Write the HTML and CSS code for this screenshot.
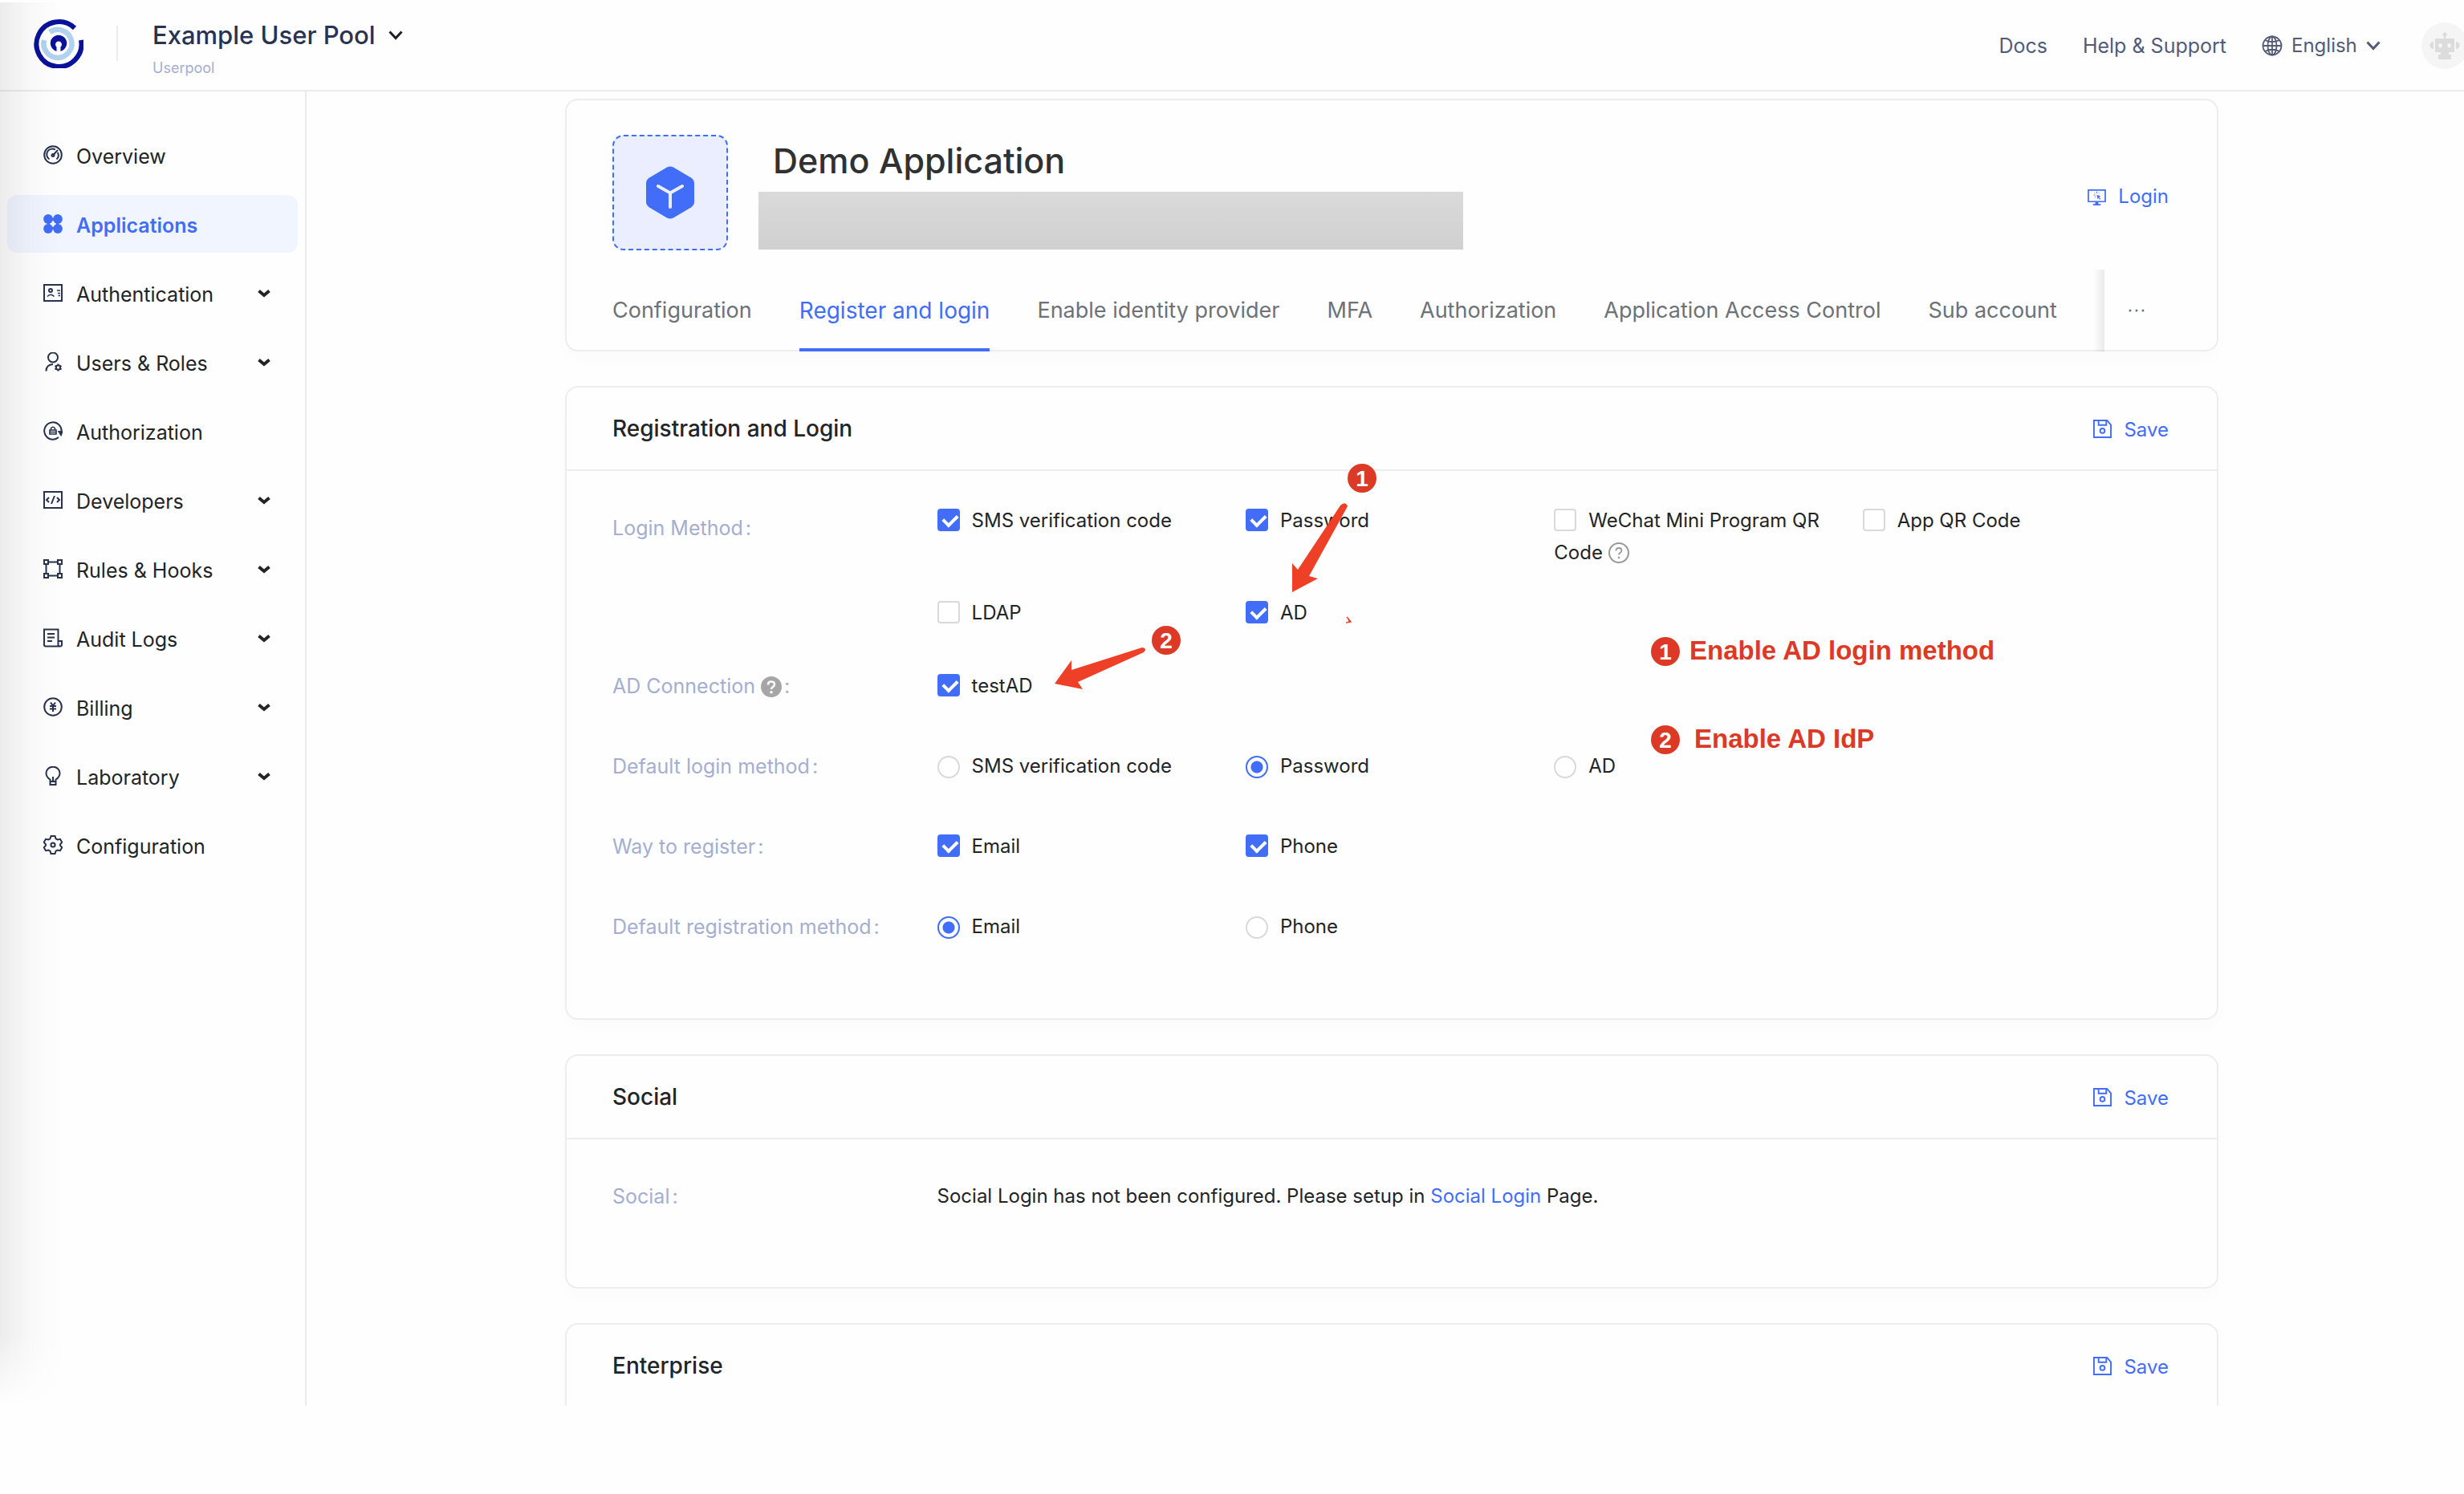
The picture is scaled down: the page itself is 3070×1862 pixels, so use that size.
FILE: index.html
```html
<!DOCTYPE html>
<html lang="en">
<head>
<meta charset="utf-8">
<title>Demo Application</title>
<link rel="stylesheet" href="styles.css">
</head>
<body>
<svg class="defs" aria-hidden="true">
  <symbol id="chevron" viewBox="0 0 18 12"><path d="M1.500 1.500l7.500 8 7.500-8" fill="none" stroke="currentColor" stroke-width="3"/></symbol>
  <symbol id="caret" viewBox="0 0 16 11"><path d="M1.500 2.500l6.500 5.500 6.500-5.500" fill="none" stroke="currentColor" stroke-width="4"/></symbol>
  <symbol id="save" viewBox="0 0 24 24"><g fill="none" stroke="currentColor" stroke-width="2"><path d="M1 1h17l5 6v16H1z"/><path d="M7 1v6h10V1"/><circle cx="12" cy="14.500" r="3"/></g></symbol>
</svg>
<div class="app">
  <header class="topbar">
    <a class="logo" href="#" aria-label="Home">
      <svg viewBox="0 0 62 62" fill="none">
        <path d="M51 12A28 28 0 1 0 59 27" stroke="#0a129b" stroke-width="6"/>
        <path d="M20 17A17.500 17.500 0 1 1 13 27" stroke="#b1d3ef" stroke-width="6.500"/>
        <path d="M25.500 39.500A10.200 10.200 0 1 1 36.500 39.500L33.500 41V35.500A4 4 0 1 0 28.500 35.500V41Z" fill="#0a129b"/>
      </svg>
    </a>
    <span class="topbar-rule"></span>
    <div class="pool">
      <label class="picker pool-picker">
        <select aria-label="User pool"><option>Example User Pool</option></select>
        <svg class="chevron"><use href="#chevron"/></svg>
      </label>
      <span class="pool-kind">Userpool</span>
    </div>
    <nav class="topbar-links">
      <a href="#">Docs</a>
      <a href="#">Help &amp; Support</a>
      <label class="picker lang-picker">
        <svg class="globe" viewBox="0 0 26 26" fill="none" stroke="currentColor" stroke-width="1.800"><circle cx="13" cy="13" r="11.500"/><ellipse cx="13" cy="13" rx="5.500" ry="11.500"/><path d="M13 1.500v23M1.500 13h23M4 6q9 4.500 18 0M4 20q9-4.500 18 0"/></svg>
        <select aria-label="Language"><option>English</option></select>
        <svg class="chevron"><use href="#chevron"/></svg>
      </label>
      <a class="avatar" href="#" aria-label="Account">
        <svg viewBox="0 0 38 34" fill="#dcdcdc"><circle cx="19" cy="3" r="2.500"/><path d="M18 4h2v5h-2z"/><path fill-rule="evenodd" d="M7 8h24v17H7zM13.500 14a2.300 2.800 0 1 0 .1 0zM24.500 14a2.300 2.800 0 1 0 .1 0z"/><path d="M5 12v9a4.500 4.500 0 0 1 0-9zM33 12v9a4.500 4.500 0 0 0 0-9zM14 25h10v3h3v6H11v-6h3z"/></svg>
      </a>
    </nav>
  </header>

  <div class="columns">
    <nav class="sidebar">
      <a class="nav-item" href="#">
        <svg class="nav-icon" viewBox="0 0 24 24"><circle cx="12" cy="12" r="10.800"/><path d="M7.500 17.500a7 7 0 0 1 7.500-12M17.800 9a7 7 0 0 1-1.300 8.500M12 12.500l6-6.500"/><circle cx="12" cy="12.500" r="1.500"/></svg>
        <span>Overview</span>
      </a>
      <a class="nav-item active" href="#">
        <svg class="nav-icon solid" viewBox="0 0 24 24"><circle cx="6" cy="6" r="5.900"/><circle cx="18" cy="6" r="5.900"/><circle cx="6" cy="18" r="5.900"/><circle cx="18" cy="18" r="5.900"/><path d="M11 5h2v3h-2zM11 16h2v3h-2zM5 11h3v2H5zM16 11h3v2h-3z"/></svg>
        <span>Applications</span>
      </a>
      <a class="nav-item" href="#">
        <svg class="nav-icon" viewBox="0 0 24 24"><path d="M1 2h22v20H1z"/><circle cx="9" cy="9" r="2"/><path d="M5 16.500q4-4.500 8.500 0M17 9h4M18 12.500h3M18.500 15.500h2.500" stroke-width="1.600"/></svg>
        <span>Authentication</span><svg class="caret"><use href="#caret"/></svg>
      </a>
      <a class="nav-item" href="#">
        <svg class="nav-icon" viewBox="0 0 24 24"><circle cx="12" cy="6.500" r="6"/><path d="M3.500 23.500q0-8 8.500-8.500"/><circle cx="18.500" cy="19" r="2.700"/><path d="M18.500 14.500v2M18.500 21.500v2M14.500 16.800l1.700 1M20.800 20.300l1.700 1M14.500 21.300l1.700-1M20.800 17.800l1.700-1"/></svg>
        <span>Users &amp; Roles</span><svg class="caret"><use href="#caret"/></svg>
      </a>
      <a class="nav-item" href="#">
        <svg class="nav-icon" viewBox="0 0 24 24"><path d="M22.500 13.500A10.700 10.700 0 1 0 19 20"/><path d="M19.500 13h4l-1.500 4z" fill="currentColor"/><path d="M8 11h8v5H8zM9.500 11V9q2.500-3.500 5 0v2M8 13.500h8" stroke-width="1.600"/></svg>
        <span>Authorization</span>
      </a>
      <a class="nav-item" href="#">
        <svg class="nav-icon" viewBox="0 0 24 24"><path d="M1 2h22v20H1zM7 9l-3 3 3 3M17 9l3 3-3 3M14 7l-4 10"/></svg>
        <span>Developers</span><svg class="caret"><use href="#caret"/></svg>
      </a>
      <a class="nav-item" href="#">
        <svg class="nav-icon" viewBox="0 0 24 24"><path d="M1 1h5v5H1zM18 1h5v5h-5zM1 18h5v5H1zM18 18h5v5h-5zM6 3.500h12M6 20.500h12M3.500 6v12M20.500 6v12"/></svg>
        <span>Rules &amp; Hooks</span><svg class="caret"><use href="#caret"/></svg>
      </a>
      <a class="nav-item" href="#">
        <svg class="nav-icon" viewBox="0 0 24 24"><path d="M18.500 22.500H3q-2 0-2-2V1.500h17.500zM18.500 16H23v4.500q0 2-2.200 2t-2.300-2zM5 7h9M5 11.500h9M5 16h6"/></svg>
        <span>Audit Logs</span><svg class="caret"><use href="#caret"/></svg>
      </a>
      <a class="nav-item" href="#">
        <svg class="nav-icon" viewBox="0 0 24 24"><circle cx="12" cy="12" r="10.800"/><path d="M9 6.500l3 4 3-4M12 10.500V18M8 11h8M8 14.500h8"/></svg>
        <span>Billing</span><svg class="caret"><use href="#caret"/></svg>
      </a>
      <a class="nav-item" href="#">
        <svg class="nav-icon" viewBox="0 0 24 24"><path d="M8.500 19v-2.500q-5-3-5-8a8.500 7.800 0 0 1 17 0q0 5-5 8V19zM12 13v5.500M8.500 19v4h7v-4"/></svg>
        <span>Laboratory</span><svg class="caret"><use href="#caret"/></svg>
      </a>
      <a class="nav-item" href="#">
        <svg class="nav-icon" viewBox="0 0 24 24"><path d="M9.500 1h5l1 3.300 2.200 1.200L21 4.800l2.300 4-2.300 2.500v1.400l2.300 2.500-2.300 4-3.300-.7-2.200 1.200-1 3.300h-5l-1-3.300-2.200-1.200-3.300.7-2.300-4L3 12.700v-1.400L.7 8.800l2.300-4 3.300.7 2.200-1.200z"/><circle cx="12" cy="12" r="2.600"/></svg>
        <span>Configuration</span>
      </a>
    </nav>

    <main class="content">
      <section class="card">
        <div class="app-head">
          <div class="app-icon">
            <svg viewBox="0 0 60 66"><path d="M26 1.500q4-2 8 0l22 13q4 2.500 4 7v23q0 4.500-4 7l-22 13q-4 2-8 0l-22-13q-4-2.500-4-7v-23q0-4.500 4-7z" fill="#426df8"/><path d="M15 25l15 8.500L45 25M30 33.500V51" fill="none" stroke="#eaeeff" stroke-width="4" stroke-linecap="round"/></svg>
          </div>
          <div class="app-title">
            <h1>Demo Application</h1>
            <div class="redacted"></div>
          </div>
          <button class="action" type="button">
            <svg viewBox="0 0 24 24"><path d="M1 3h22v15H1z" fill="none" stroke="currentColor" stroke-width="1.800"/><path d="M10 18h4v3h3v2H7v-2h3zM12 9l5 2-2 1 2 2.500-1 1-2-2.500-1 2z" fill="currentColor"/><path d="M12 5v2M8 9.500h2M9 6.500l1 1M15 6.500l-1 1M9.500 12.500l1-1" stroke="currentColor"/></svg>
            <span>Login</span>
          </button>
        </div>
        <div class="tabs">
          <div class="tab-list" role="tablist">
            <button type="button" role="tab">Configuration</button>
            <button type="button" role="tab" aria-selected="true">Register and login</button>
            <button type="button" role="tab">Enable identity provider</button>
            <button type="button" role="tab">MFA</button>
            <button type="button" role="tab">Authorization</button>
            <button type="button" role="tab">Application Access Control</button>
            <button type="button" role="tab">Sub account</button>
          </div>
          <button class="tab-more" type="button" aria-label="More tabs"><svg viewBox="0 0 20 4" fill="currentColor"><circle cx="2" cy="2" r="1.500"/><circle cx="10" cy="2" r="1.500"/><circle cx="18" cy="2" r="1.500"/></svg></button>
        </div>
      </section>

      <section class="card">
        <div class="card-head">
          <h2>Registration and Login</h2>
          <button class="action" type="button"><svg><use href="#save"/></svg><span>Save</span></button>
        </div>
        <form class="card-body">
          <div class="row first">
            <span class="row-label low">Login Method<i>:</i></span>
            <div class="options">
              <label><input type="checkbox" checked>SMS verification code</label>
              <label><input type="checkbox" checked>Password</label>
              <label><input type="checkbox">WeChat Mini Program QR Code <svg class="hint" viewBox="0 0 26 26"><circle cx="13" cy="13" r="12" fill="none" stroke="#999" stroke-width="2"/><path d="M9.500 10.500q0-3.500 3.500-3.500t3.500 3q0 2-2 3-1.500.8-1.500 2.500" fill="none" stroke="#999" stroke-width="1.800"/><circle cx="13" cy="19" r="1.300" fill="#999"/></svg></label>
              <label><input type="checkbox">App QR Code</label>
              <label><input type="checkbox">LDAP</label>
              <label><input type="checkbox" checked>AD</label>
            </div>
          </div>
          <div class="row second">
            <span class="row-label">AD Connection <svg class="hint" viewBox="0 0 26 26"><circle cx="13" cy="13" r="13" fill="#a6a6a6"/><path d="M9 10.500q0-4 4-4t4 3.500q0 2-2 3.200-2 1.100-2 2.800" fill="none" stroke="#fff" stroke-width="2.600"/><circle cx="13" cy="19.800" r="1.800" fill="#fff"/></svg><i>:</i></span>
            <div class="options">
              <label><input type="checkbox" checked>testAD</label>
            </div>
          </div>
          <div class="row">
            <span class="row-label">Default login method<i>:</i></span>
            <div class="options">
              <label><input type="radio" name="login">SMS verification code</label>
              <label><input type="radio" name="login" checked>Password</label>
              <label><input type="radio" name="login">AD</label>
            </div>
          </div>
          <div class="row">
            <span class="row-label">Way to register<i>:</i></span>
            <div class="options">
              <label><input type="checkbox" checked>Email</label>
              <label><input type="checkbox" checked>Phone</label>
            </div>
          </div>
          <div class="row">
            <span class="row-label">Default registration method<i>:</i></span>
            <div class="options">
              <label><input type="radio" name="register" checked>Email</label>
              <label><input type="radio" name="register">Phone</label>
            </div>
          </div>
        </form>
        <svg class="notes" viewBox="0 0 1820 500" fill="#dc3a26">
          <g fill="#ee4026">
            <path d="M966 149q6-6 9 1L927 237l11 3-32 17v-36l7 8z"/>
            <path d="M719 326q7 1 2 6L639 369l6 9-35-7 21-29v12z"/>
            <path d="M974 288l5 6-6 1M976 290l1 4" fill="none" stroke="#ee4026" stroke-width="1.500"/>
          </g>
          <circle cx="993" cy="115" r="18"/><text class="digit" x="993" y="125">1</text>
          <circle cx="749" cy="317" r="18"/><text class="digit" x="749" y="327">2</text>
          <circle cx="1371" cy="331" r="18"/><text class="digit" x="1371" y="341">1</text>
          <text x="1401" y="341">Enable AD login method</text>
          <circle cx="1371" cy="441" r="18"/><text class="digit" x="1371" y="451">2</text>
          <text x="1407" y="451">Enable AD IdP</text>
        </svg>
      </section>

      <section class="card">
        <div class="card-head">
          <h2>Social</h2>
          <button class="action" type="button"><svg><use href="#save"/></svg><span>Save</span></button>
        </div>
        <div class="card-body compact">
          <div class="row">
            <span class="row-label">Social<i>:</i></span>
            <p>Social Login has not been configured. Please setup in <a href="#">Social Login</a> Page.</p>
          </div>
        </div>
      </section>

      <section class="card">
        <div class="card-head">
          <h2>Enterprise</h2>
          <button class="action" type="button"><svg><use href="#save"/></svg><span>Save</span></button>
        </div>
        <div class="card-body"></div>
      </section>
    </main>
  </div>
</div>
</body>
</html>
```
FILE: styles.css
```css
* { box-sizing: border-box; }

body {
  margin: 0;
  background: #fefefe;
  color: #222426;
  font: 24px/40px Inter, "Liberation Sans", sans-serif;
}

h1, h2, p { margin: 0; }
a { color: inherit; text-decoration: none; }
button, select {
  margin: 0;
  padding: 0;
  border: 0;
  background: none;
  color: inherit;
  font: inherit;
  cursor: pointer;
}
select { appearance: none; }
.defs { display: none; }

.app {
  position: relative;
  display: flex;
  flex-direction: column;
  height: calc(100vh - 110px);
  overflow: hidden;
}

/* soft shade along the left window edge */
.app::after {
  content: "";
  position: absolute;
  inset: 3px auto 0 0;
  width: 76px;
  background: linear-gradient(to right, rgba(0, 0, 0, .07), rgba(0, 0, 0, .025) 50%, transparent);
  mask-image: linear-gradient(to top, transparent, #000 90px);
  pointer-events: none;
}

/* top bar */
.topbar {
  display: flex;
  flex: none;
  align-items: center;
  height: 114px;
  padding-left: 42px;
  border-bottom: 2px solid #ebebeb;
}
.logo, .logo svg { display: block; width: 62px; height: 62px; }
.logo { margin-bottom: 5px; }
.topbar-rule { width: 2px; height: 44px; margin: 0 43px 5px 41px; background: #ebebeb; }
.pool { display: flex; flex-direction: column; gap: 9px; padding-top: 9px; }
.pool-kind { color: #a5aed0; font-size: 18px; line-height: 24px; }
.picker { display: flex; align-items: center; }
.pool-picker { gap: 16px; color: #202126; }
.pool-picker select { color: #293350; font-size: 31px; font-weight: 500; line-height: 40px; }
.chevron { width: 18px; height: 12px; }
.topbar-links {
  display: flex;
  align-items: center;
  gap: 44px;
  margin: 2px -5px 0 auto;
  color: #535b78;
  font-size: 25px;
}
.lang-picker { gap: 11px; font-size: 24px; }
.globe { width: 26px; height: 26px; }
.avatar {
  display: grid;
  place-items: center;
  width: 58px;
  height: 58px;
  margin-left: 7px;
  border-radius: 50%;
  background: #f5f5f5;
}
.avatar svg { width: 38px; height: 34px; }

.columns { display: flex; flex: 1; min-height: 0; }

/* side navigation */
.sidebar {
  display: flex;
  flex: none;
  flex-direction: column;
  gap: 14px;
  width: 382px;
  padding: 43px 9px 0;
  border-right: 2px solid #ebebeb;
  font-size: 25px;
}
.nav-item {
  display: flex;
  flex: none;
  align-items: center;
  gap: 17px;
  height: 72px;
  padding: 0 34px 0 45px;
  border-radius: 12px;
}
.nav-item span { padding-top: 4px; }
.nav-item.active { background: #f1f5ff; color: #426df8; font-weight: 600; }
.nav-icon {
  width: 24px;
  height: 24px;
  fill: none;
  stroke: currentColor;
  stroke-width: 2;
  color: #293350;
}
.nav-icon.solid { fill: #426df8; stroke: none; }
.caret { width: 16px; height: 11px; margin-left: auto; }

/* cards */
.content {
  display: flex;
  flex: 1;
  flex-direction: column;
  gap: 43px;
  min-width: 0;
  padding: 9px 306px 0 322px;
}
.card {
  position: relative;
  flex: none;
  border: 2px solid #ededed;
  border-radius: 16px;
  box-shadow: 0 10px 20px rgba(0, 20, 10, .015);
}
.card-head {
  display: flex;
  align-items: center;
  justify-content: space-between;
  height: 104px;
  padding: 0 60px 0 57px;
  border-bottom: 2px solid #ededed;
}
h2 { font-size: 28px; font-weight: 500; }
.action { display: flex; align-items: center; gap: 15px; color: #426df8; }
.action svg { width: 23px; height: 23px; }
.card-head .action span { padding-top: 3px; }
.card-body { padding: 42px 57px 94px; }
.card-body.compact { padding: 51px 57px 93px; }

.app-head {
  display: flex;
  align-items: flex-start;
  padding: 43px 60px 0 57px;
}
.app-icon {
  display: grid;
  place-items: center;
  width: 144px;
  height: 144px;
  border: 2px dashed #426df8;
  border-radius: 14px;
  background: #eaeeff;
}
.app-icon svg { width: 60px; height: 66px; }
.app-title { flex: 1; padding-left: 38px; }
h1 {
  padding: 7px 0 14px 18px;
  color: #303133;
  font-size: 43px;
  font-weight: 500;
  line-height: 50px;
}
.redacted {
  width: 53%;
  height: 72px;
  background: linear-gradient(to bottom, #dadada, #d0d0d0);
}
.app-head .action { margin-top: 57px; }

.tabs {
  display: flex;
  justify-content: space-between;
  height: 102px;
  margin: 24px 0 -2px;
}
.tab-list {
  display: flex;
  gap: 59px;
  padding-left: 57px;
  color: #6d7278;
  font-size: 27px;
  white-space: nowrap;
}
.tab-list [aria-selected] {
  border-bottom: 4px solid #426df8;
  border-top: 4px solid transparent;
  color: #426df8;
  font-size: 28px;
}
.tab-more {
  position: relative;
  width: 140px;
  padding-left: 30px;
  color: #6d7278;
  text-align: left;
}
.tab-more::before {
  content: "";
  position: absolute;
  inset: 0 100% 0 -14px;
  background: linear-gradient(to left, rgba(0, 0, 0, .08), transparent);
}
.tab-more svg { display: block; width: 20px; height: 4px; }

/* settings form */
.row {
  display: grid;
  grid-template-columns: 5fr 19fr;
  margin-top: 60px;
}
.row.first, .compact .row { margin-top: 0; }
.row.second { margin-top: 51px; }
.row-label { color: #a5aed0; font-size: 25px; }
.row-label.low { padding-top: 9px; }
.row-label i { margin-left: 3px; font-style: normal; }
.options {
  display: grid;
  grid-template-columns: repeat(4, 1fr);
  row-gap: 35px;
}
.options label { padding-right: 16px; }
.hint { width: 26px; height: 26px; vertical-align: -5px; }
.row p a { color: #426df8; }

.options input {
  appearance: none;
  width: 28px;
  height: 28px;
  margin: 0 15px 0 0;
  border: 2px solid #d9d9d9;
  border-radius: 4px;
  background: #fff;
  vertical-align: -5px;
}
.options input[type="checkbox"]:checked {
  border-color: #426df8;
  background: #426df8;
}
.options input[type="checkbox"]:checked::before {
  content: "";
  display: block;
  width: 8px;
  height: 14px;
  margin: 2px 0 0 8px;
  border: solid #fff;
  border-width: 0 4px 4px 0;
  rotate: 45deg;
}
.options input[type="radio"] { border-radius: 50%; vertical-align: -7px; }
.options input[type="radio"]:checked {
  border-color: #426df8;
  background: radial-gradient(#426df8 7px, transparent 8px);
}

/* walkthrough callouts drawn over the form */
.notes {
  position: absolute;
  top: -2px;
  left: -2px;
  width: 1820px;
  height: 500px;
  pointer-events: none;
  font: bold 33px/40px "Liberation Sans", Arial, sans-serif;
}
.notes .digit { font-size: 28px; fill: #fff; text-anchor: middle; }
```
